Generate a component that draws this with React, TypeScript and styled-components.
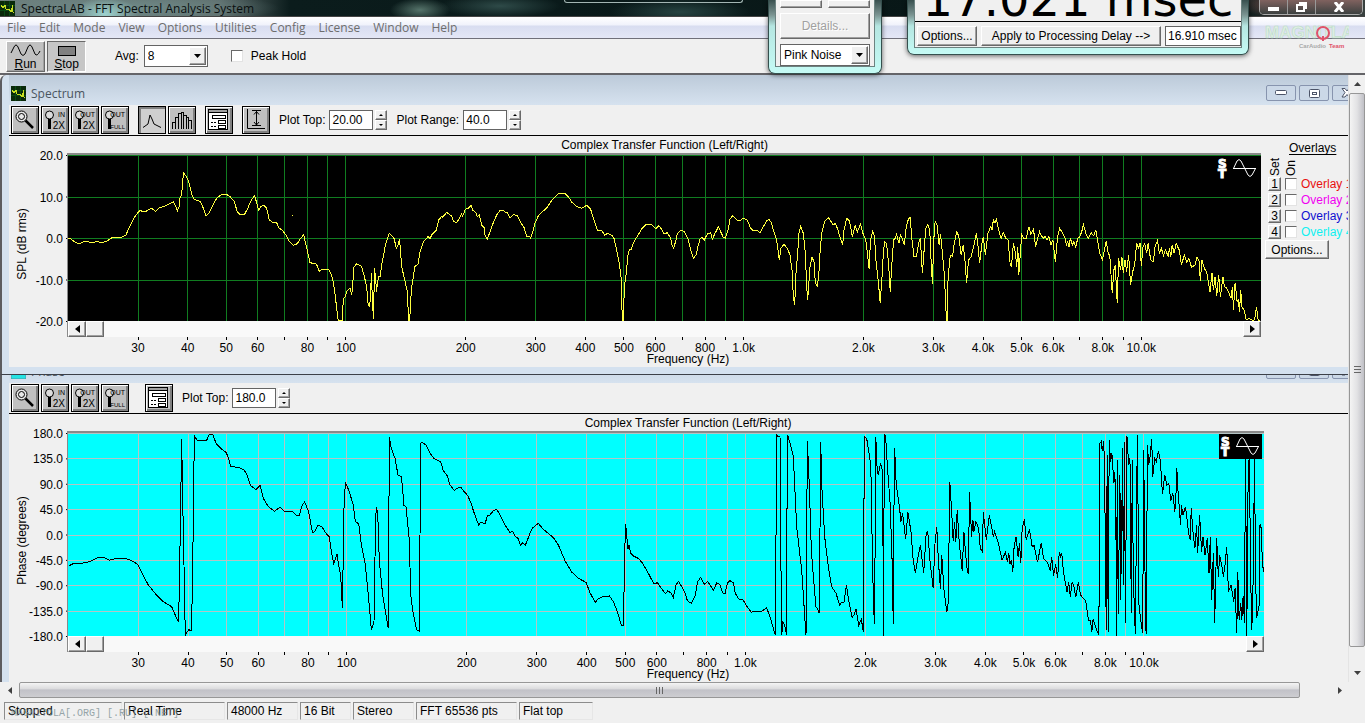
import type { ReactNode } from "react";
import styled, { createGlobalStyle, css } from "styled-components";

const GlobalStyle = createGlobalStyle`
  * {
    box-sizing: border-box;
  }

  body {
    margin: 0;
    background-color: #f0f0f0;
    color: #000;
    font-family: "Liberation Sans", Arial, sans-serif;
    font-size: 12px;
  }

  button,
  input,
  select {
    margin: 0;
    padding: 0;
    font: inherit;
    color: inherit;
  }
`;

const raised = css`
  border: 1px solid;
  border-color: #fff #696969 #696969 #fff;
  box-shadow: inset -1px -1px 0 #a0a0a0;
`;

const uiFont = css`
  font-family: "Open Sans", "Noto Sans", sans-serif;
`;

const Page = styled.div`
  position: relative;
  display: flex;
  flex-direction: column;
  min-height: 100vh;
  overflow: hidden;
`;

const AppTitle = styled.header`
  ${uiFont}
  display: flex;
  align-items: center;
  gap: 6px;
  height: 17px;
  overflow: hidden;
  white-space: nowrap;
  color: #0a0f0f;
  border-bottom: 1px solid #444;
  background:
    radial-gradient(ellipse 34px 16px at 105px 14px, #9ed3cf, transparent),
    radial-gradient(ellipse 150px 16px at 130px 8px, #6f8a88, transparent),
    radial-gradient(ellipse 30px 12px at 420px 10px, #55736a, transparent),
    radial-gradient(ellipse 60px 12px at 500px 6px, #2e4a48, transparent),
    radial-gradient(ellipse 70px 14px at 680px 12px, #274442, transparent),
    radial-gradient(ellipse 60px 16px at 1300px 4px, #9a5c58, transparent),
    linear-gradient(90deg, #6d7f7d, #5c6b6a 220px, #0b1c1c 290px, #071515 1200px, #39413f);
`;

const MenuBar = styled.nav`
  ${uiFont}
  display: flex;
  align-items: center;
  gap: 13px;
  height: 22px;
  padding: 0 7px;
  border-bottom: 1px solid #70707a;
  background: linear-gradient(#fff, #f0f2fb 8px, #d8ddf0 9px, #e4e7f6);
`;

const MenuLink = styled.a`
  color: #6d6d6d;
  text-decoration: none;
`;

const MainToolbar = styled.div`
  display: flex;
  align-items: center;
  height: 36px;
  padding-left: 6px;
  border-bottom: 2px solid #646468;
`;

const RunButton = styled.button<{ $pressed?: boolean }>`
  ${raised}
  display: flex;
  flex-direction: column;
  align-items: center;
  width: 39px;
  height: 31px;
  margin-right: 2px;
  padding-top: 1px;
  line-height: 12px;
  background-color: ${({ $pressed }) => ($pressed ? "#c6c6c6" : "#c0c0c0")};
  ${({ $pressed }) =>
    $pressed &&
    css`
      border-color: #696969 #fff #fff #696969;
      box-shadow: none;
    `}

  svg {
    flex: none;
  }

  u {
    text-underline-offset: 1px;
  }
`;

const AvgLabel = styled.label`
  margin: 0 5px 0 27px;
`;

const SelectBox = styled.span<{ $width: number }>`
  display: flex;
  width: ${({ $width }) => $width}px;
  height: 22px;
  border: 1px solid #646464;
  background-color: #fff;

  select {
    flex: 1;
    min-width: 0;
    margin-right: -17px;
    padding: 0 3px;
    border: 0;
    appearance: none;
    background: none;
  }

  svg {
    ${raised}
    width: 17px;
    height: 18px;
    margin: 1px;
    background-color: #f0f0f0;
    pointer-events: none;
  }
`;

const Check = styled.input`
  appearance: none;
  flex: none;
  width: 12px;
  height: 12px;
  border: 1px solid;
  border-color: #696969 #e3e3e3 #e3e3e3 #696969;
  background-color: #fff;
`;

const CheckLabel = styled.label`
  display: flex;
  align-items: center;
  gap: 8px;
  margin-left: 23px;
`;

const Workspace = styled.main`
  flex: 1;
  display: grid;
  grid-template-columns: minmax(0, 1fr) 17px;
  grid-template-rows: 1fr 16px;
`;

const Documents = styled.div`
  overflow: hidden;
  background-color: #f0f0f0;
`;

const Doc = styled.section<{ $last?: boolean }>`
  padding: 0 0 ${({ $last }) => ($last ? 0 : 7)}px 7px;
  border-left: 2px solid #5c5c60;
  border-bottom: ${({ $last }) => ($last ? "0" : "1px solid #3c4048")};
  border-top-left-radius: ${({ $last }) => ($last ? 0 : 6)}px;
  background-color: #d4e1ef;
`;

const TitleClip = styled.div<{ $height: number }>`
  display: flex;
  align-items: flex-end;
  height: ${({ $height }) => $height}px;
  overflow: hidden;
`;

const DocTitle = styled.div`
  ${uiFont}
  flex: 1;
  display: flex;
  align-items: flex-end;
  gap: 5px;
  height: 30px;
  padding: 0 0 4px 2px;
  color: #4a5560;
  background: linear-gradient(#bccad9, #d6e2ef);

  span {
    line-height: 14px;
  }
`;

const DocButtons = styled.div`
  display: flex;
  gap: 3px;
  margin: 0 -14px 0 auto;
`;

const DocButton = styled.button`
  display: grid;
  place-items: center;
  width: 30px;
  height: 16px;
  border: 1px solid #8794ae;
  border-radius: 2px;
  background-color: #cbd8e7;
`;

const Client = styled.div`
  background-color: #f0f0f0;
`;

const PlotToolbar = styled.div`
  display: flex;
  align-items: center;
  gap: 9px;
  height: 31px;
  padding-left: 2px;
  border-bottom: 1px solid #000;
`;

const ToolGroup = styled.div<{ $indent?: number }>`
  display: flex;
  gap: 2px;
  margin-left: ${({ $indent }) => $indent ?? 0}px;
`;

const ToolButton = styled.button<{ $pressed?: boolean }>`
  width: 28px;
  height: 28px;
  border: 1px solid #000;
  background-color: ${({ $pressed }) => ($pressed ? "#cfcfcf" : "#c0c0c0")};
  box-shadow: ${({ $pressed }) =>
    $pressed ? "inset 2px 2px 0 #808080" : "inset 1px 1px 0 #fff, inset -2px -2px 0 #808080"};

  svg {
    display: block;
  }
`;

const Field = styled.div`
  display: flex;
  align-items: center;
  gap: 4px;

  input {
    width: 44px;
    height: 20px;
    padding: 0 2px;
    border: 1px solid #646464;
    background-color: #fff;
  }
`;

const Spinner = styled.span`
  display: flex;
  flex-direction: column;
  margin-left: -2px;

  button {
    ${raised}
    display: grid;
    place-items: center;
    width: 12px;
    height: 10px;
    background-color: #f0f0f0;
  }
`;

const Chart = styled.div<{ $side: number }>`
  display: grid;
  grid-template-columns: 59px minmax(0, 1fr) ${({ $side }) => $side}px;
  grid-template-rows: 17px auto 16px 16px 14px;
`;

const ChartTitle = styled.h2<{ $wide: boolean }>`
  grid-row: 1;
  grid-column: ${({ $wide }) => ($wide ? "1 / -1" : "2")};
  margin: 0;
  padding-left: ${({ $wide }) => ($wide ? 19 : 0)}px;
  font-size: 12px;
  font-weight: 400;
  line-height: 18px;
  text-align: center;
`;

const YAxis = styled.svg`
  grid-row: 2;
  grid-column: 1;
  width: 59px;
  margin-top: 2px;
  overflow: visible;
`;

const Plot = styled.div`
  position: relative;
  grid-row: 2;
  grid-column: 2;
  border-top: 2px solid #8a8a8a;
  border-left: 1px solid #8a8a8a;
  margin-left: -1px;

  > svg:first-child {
    display: block;
    width: 100%;
  }
`;

const Marker = styled.svg<{ $boxed: boolean }>`
  position: absolute;
  top: 1px;
  right: 2px;
  background-color: ${({ $boxed }) => ($boxed ? "#000" : "transparent")};
`;

const PlotScroll = styled.div`
  grid-row: 3;
  grid-column: 2;
  display: flex;
  margin-left: -1px;
  border-left: 1px solid #8a8a8a;
  background-color: #f9f9f9;

  button {
    ${raised}
    display: grid;
    place-items: center;
    width: 18px;
    height: 16px;
    background-color: #f0f0f0;
  }

  button:last-child {
    margin-left: auto;
  }
`;

const XAxis = styled.svg`
  grid-row: 4;
  grid-column: 2;
  width: 100%;
  height: 16px;
  overflow: visible;
`;

const AxisCaption = styled.div`
  grid-row: 5;
  grid-column: 1 / -1;
  padding-left: 19px;
  line-height: 13px;
  text-align: center;
`;

const OverlayPanel = styled.aside`
  grid-row: 1 / 3;
  grid-column: 3;
  display: flex;
  flex-direction: column;
  padding: 5px 0 0 7px;
  overflow: hidden;
  white-space: nowrap;

  > u {
    padding-left: 21px;
    line-height: 14px;
    text-underline-offset: 2px;
  }
`;

const OverlayHeads = styled.div`
  display: flex;
  gap: 2px;
  height: 21px;
  line-height: 14px;

  span {
    writing-mode: vertical-rl;
    transform: rotate(180deg);
  }
`;

const OverlayRow = styled.div<{ $color: string }>`
  display: flex;
  align-items: center;
  gap: 4px;
  height: 16px;

  button {
    ${raised}
    flex: none;
    width: 13px;
    height: 14px;
    line-height: 11px;
    background-color: #f0f0f0;
  }

  label {
    color: ${({ $color }) => $color};
  }
`;

const ClassicButton = styled.button<{ $width: number; $height?: number }>`
  ${raised}
  flex: none;
  width: ${({ $width }) => $width}px;
  height: ${({ $height }) => $height ?? 20}px;
  background-color: #f0f0f0;

  &:disabled {
    color: #a0a0a0;
    text-shadow: 1px 1px 0 #fff;
  }
`;

const OverlayOptions = styled(ClassicButton)`
  margin: 0 0 0 -3px;
`;

const VScroll = styled.div`
  display: flex;
  flex-direction: column;
  align-items: center;
  border-left: 1px solid #e4e4e4;
  background-color: #f0f0f0;
`;

const HScroll = styled.div`
  display: flex;
  align-items: center;
  background-color: #f0f0f0;
`;

const ScrollArrow = styled.button<{ $w: number; $h: number }>`
  display: grid;
  place-items: center;
  width: ${({ $w }) => $w}px;
  height: ${({ $h }) => $h}px;
  border: 0;
  background: none;
`;

const VThumb = styled.div`
  flex: 1;
  display: grid;
  place-items: center;
  width: 16px;
  border: 1px solid #979797;
  border-radius: 2px;
  background: linear-gradient(90deg, #f4f4f4, #e2e2e4 50%, #c0c0c6);
`;

const HThumb = styled.div`
  flex: 1;
  display: grid;
  place-items: center;
  height: 16px;
  border: 1px solid #979797;
  border-radius: 2px;
  background: linear-gradient(#f4f4f4, #dcdcde 40%, #c2c2c8 50%, #cdcdd1);
`;

const StatusBar = styled.footer`
  position: relative;
  display: flex;
  gap: 2px;
  height: 25px;
  padding: 4px 4px;
`;

const StatusCell = styled.div<{ $width: number }>`
  width: ${({ $width }) => $width}px;
  height: 18px;
  padding-left: 3px;
  border: 1px solid;
  border-color: #8c8c8c #e6e6e6 #e6e6e6 #8c8c8c;
  line-height: 16px;
  white-space: nowrap;
`;

const SiteMark = styled.div`
  position: absolute;
  left: 11px;
  bottom: 3px;
  color: #7f9296;
  font-family: "Liberation Mono", monospace;
  font-size: 10px;
  line-height: 12px;
  opacity: 0.8;
`;

const Glass = styled.div<{ $left: number; $width: number; $height: number }>`
  position: absolute;
  top: 0;
  left: ${({ $left }) => $left}px;
  width: ${({ $width }) => $width}px;
  height: ${({ $height }) => $height}px;
  padding: 0 6px 6px;
  border: 1px solid #35504e;
  border-top: 0;
  border-radius: 0 0 7px 7px;
  background: linear-gradient(#39504f, #7b9492 15px, #b5e6e1 26px, #c5fbf5);
  box-shadow: 0 1px 5px rgba(0, 0, 0, 0.6);
  overflow: hidden;
`;

const GeneratorBody = styled.div`
  display: flex;
  flex-direction: column;
  gap: 5px;
  height: 100%;
  padding: 0 4px;
  border: 1px solid #6c8280;
  border-top: 0;
  background-color: #f0f0f0;
`;

const ButtonPair = styled.div`
  display: flex;
  gap: 6px;
`;

const DelayBody = styled.div`
  height: 100%;
  border: 1px solid #6c8280;
  border-top: 0;
  background-color: #f0f0f0;
  overflow: hidden;
`;

const Readout = styled.div`
  display: flex;
  align-items: flex-end;
  justify-content: center;
  height: 22px;
  border-bottom: 1px solid #000;
  font-family: "DejaVu Sans", sans-serif;
  font-size: 48px;
  line-height: 44px;
  white-space: nowrap;
`;

const DelayRow = styled.div`
  display: flex;
  gap: 4px;
  padding: 4px 0 0 2px;

  input {
    flex: 1;
    min-width: 0;
    height: 20px;
    padding-left: 2px;
    border: 1px solid #646464;
    background-color: #fff;
  }
`;

const CaptionButtons = styled.div`
  position: absolute;
  top: 0;
  right: 2px;
  display: flex;
  height: 15px;
  border: 1px solid #aaa;
  border-top: 0;
  border-radius: 0 0 5px 5px;
  overflow: hidden;

  button {
    display: grid;
    place-items: center;
    width: 28px;
    height: 11px;
    border: 0;
    border-right: 1px solid #999;
    background: linear-gradient(#80625f, #3c4140);
    height: 14px;
  }

  button:last-child {
    width: 46px;
    border-right: 0;
  }
`;

const StripTab = styled.div`
  position: absolute;
  top: 0;
  left: 564px;
  width: 179px;
  height: 3px;
  border: 1px solid #a3b5b3;
  border-top: 0;
  border-radius: 0 0 4px 4px;
`;

const LogoMark = styled.svg`
  position: absolute;
  top: 18px;
  right: 16px;
`;

const spectrumTrace = [
  {
    transform: "",
    points:
      "204,325 213,327 222,334 234,340 240,340 252,335 264,335 276,338 292,334 304,338 318,335 336,323 364,322 378,315 384,300 396,275 408,255 419,242 430,244 440,243 453,235 460,238 466,244 478,234 490,230 520,216 527,228 532,243 537,230 540,205 545,195 548,150 551,129 558,138 564,150 570,170 576,195 582,208 600,214 606,224 618,257 627,250 640,222 650,205 662,195 680,193 690,200 702,213 712,245 718,252 734,252 742,238 752,214 764,196 769,215 776,240 783,230 791,226 800,235 808,270 820,278 830,278 836,293 848,302 858,315 866,332 880,346 892,341 900,328 911,314 918,345 925,375 930,398 948,402 952,408 957,424 966,418 978,420 986,419 992,428 1000,455 1006,500 1013,560 1015,572 1027,572 1030,505 1036,500 1041,482 1050,475 1055,495 1058,470 1061,412 1070,401 1084,408 1092,435 1100,470 1104,520 1109,532 1112,490 1114,428 1118,530 1121,566 1123,415 1127,440 1129,485 1133,455 1136,440 1141,440 1144,410 1150,380 1156,345 1168,310 1182,325 1189,354 1194,345 1199,328 1200,345",
  },
  {
    transform: "translate(1200 0)",
    points:
      "0,345 5,410 12,440 21,480 24,530 26,572 29,572 34,480 40,440 44,410 54,402 60,365 70,335 80,325 84,320 90,326 95,315 108,302 116,270 126,258 128,262 140,247 155,258 160,273 170,278 178,265 185,252 188,258 196,238 204,235 213,226 218,240 228,248 232,260 238,255 245,285 252,292 255,315 262,328 270,305 280,278 290,255 300,242 308,240 315,246 322,248 330,264 340,254 352,257 362,278 372,292 380,318 388,318 392,325 400,300 405,280 415,257 425,247 440,234 455,212 470,195 480,189 494,190 505,200 515,216 530,230 545,235 560,226 572,238 582,270 592,300 606,302 614,316 622,310 636,316 642,325 650,360 658,400 663,440 667,572 670,572 673,470 680,420 683,380 688,358 693,360 700,340 708,325 725,297 738,284 755,284 768,296 776,287 785,298 792,312 802,308 812,325 816,345 821,355 828,330 832,312 842,301 853,304 865,330 872,360 880,385 888,375 895,345 900,328 905,322 913,330 922,312 932,308 937,328 945,310 955,291 962,305 970,322 976,325 984,300 990,268 998,257 1012,271 1020,272 1030,264 1042,270 1052,295 1060,303 1073,302 1080,309 1090,290 1100,273 1107,267 1115,280 1120,300 1130,330 1138,390 1143,355 1152,343 1162,355 1170,375 1176,420 1180,500 1184,525 1188,430 1193,370 1197,310 1202,290 1210,310 1216,370 1220,470 1223,510 1230,410 1236,382 1242,395 1246,460 1252,468 1256,440 1260,370 1265,310 1274,275 1285,262 1300,285 1306,280 1314,300 1320,322",
  },
  {
    transform: "translate(2520 0) scale(1.0045 1)",
    points:
      "0,322 8,345 12,300 20,265 28,272 37,320 45,287 52,305 61,283 70,315 77,330 82,370 87,418 91,330 98,303 103,320 108,400 114,450 120,518 125,450 130,360 134,335 139,340 145,400 150,485 155,400 160,330 165,325 169,312 176,340 180,315 186,325 192,345 198,290 205,265 210,263 214,320 221,380 228,380 235,340 240,325 246,430 252,350 256,295 262,283 268,300 272,390 276,462 280,330 284,275 290,285 296,345 300,312 306,370 312,440 318,572 321,572 322,460 328,385 332,375 336,380 341,340 349,305 355,320 362,375 368,345 374,400 378,458 384,390 392,380 400,345 407,310 412,345 417,400 424,340 428,320 434,375 442,310 450,290 454,300 458,270 463,278 467,268 474,300 481,325 488,308 495,325 502,330 508,400 512,410 518,338 524,370 528,410 531,350 534,435 540,350 543,315 548,325 556,325 564,290 570,312 578,298 584,350 596,305 602,318 608,325 612,318 618,330 624,320 630,345 636,330 643,395 650,320 656,295 665,310 672,325 676,345 680,335 684,350 688,325 694,345 698,335 704,352 710,325 716,320 722,305 727,284 735,312 742,325 750,308 758,318 764,300 768,325 776,370 784,390 795,332 800,365 806,380 813,490 818,420 822,405 828,518 832,385 838,420 842,380 846,430 851,390 856,425 862,375 868,465 874,425 880,405 886,338 892,355 896,340 900,408 905,350 910,340 916,370 920,340 928,390 936,395 941,350 948,332 954,370 960,355 966,378 972,360 980,378 984,355 988,380 992,345 998,370 1004,340 1013,360 1020,405 1028,375 1036,398 1042,385 1050,412 1060,405 1066,382 1073,395 1076,452 1081,390 1088,415 1095,425 1100,455 1105,485 1111,430 1115,480 1120,440 1125,498 1131,435 1136,500 1144,440 1148,470 1154,472 1160,485 1168,505 1172,470 1175,540 1180,458 1186,515 1190,510 1193,545 1197,480 1200,530 1207,540 1213,570 1222,565 1232,571 1238,570 1244,530 1249,571 1253,571",
  },
];

const phaseTrace = [
  {
    transform: "",
    points:
      "207,602 220,596 250,594 270,590 295,577 310,577 328,586 345,581 375,580 390,585 412,597 428,628 445,660 468,688 490,710 515,725 530,760 536,770 541,490 545,222 548,400 552,600 554,740 557,808 566,794 574,797 578,640 581,330 584,214 592,226 620,226 628,208 638,207 648,235 665,252 678,262 686,280 692,305 715,307 732,314 742,332 752,362 768,374 780,361 790,400 805,425 824,439 840,426 855,440 875,438 890,451 898,451 906,422 914,411 926,440 933,480 938,503 944,500 953,482 965,484 980,508 988,516 995,565 1001,596 1011,568 1016,600 1022,630 1027,728 1030,560 1032,430 1036,352 1046,375 1060,420 1066,470 1076,476 1084,540 1096,600 1105,690 1114,794 1122,770 1127,450 1130,432 1133,440 1138,590 1148,690 1158,750 1165,790 1167,400 1168,216 1174,250 1185,280 1194,330 1200,333",
  },
  {
    transform: "translate(1200 135)",
    points:
      "0,198 4,200 8,240 12,286 18,290 22,330 27,380 33,560 38,600 44,630 50,660 58,663 60,380 62,100 66,97 78,105 90,130 102,145 122,156 130,182 142,198 150,225 163,241 175,233 183,233 192,244 204,258 215,285 220,302 230,330 236,345 243,336 255,342 262,318 270,315 280,302 290,298 300,315 315,345 330,368 338,363 345,378 354,385 362,406 368,398 376,406 390,370 398,354 415,340 430,358 460,383 475,405 495,452 515,486 535,505 558,517 570,548 586,578 592,568 612,558 620,561 628,557 640,575 652,605 664,645 670,645 673,500 675,400 677,343 684,418 687,405 692,430 700,438 715,445 728,460 745,490 762,522 772,518 785,536 796,551 803,543 812,548 820,562 828,525 836,514 845,530 856,550 862,572 874,580 886,555 893,515 902,502 914,524 922,514 930,525 940,541 950,519 960,524 968,548 975,552 982,520 990,512 1000,518 1006,550 1016,567 1028,568 1040,588 1054,607 1064,604 1086,603 1100,594 1110,620 1126,676 1128,380 1130,76 1134,80 1140,78 1142,380 1145,676 1149,635 1154,645 1160,676 1161,300 1163,76 1170,98 1180,140 1190,350 1205,480 1218,676 1220,400 1222,92 1228,230 1234,420 1240,500 1248,590 1254,600 1258,610 1260,360 1262,95 1266,240 1274,380 1285,470 1295,530 1308,550 1320,588",
  },
  {
    transform: "translate(2520 0) scale(1.0045 1)",
    points:
      "0,720 4,712 12,712 19,660 26,705 36,757 42,750 48,733 56,780 64,762 67,785 70,800 71,510 73,215 80,222 92,300 96,530 100,720 103,778 106,400 107,215 110,300 114,330 121,295 128,320 129,812 131,500 133,210 136,212 142,310 150,420 156,600 159,778 161,450 163,248 168,360 178,430 182,470 187,445 196,522 203,442 212,500 218,580 225,625 232,580 240,540 246,590 250,625 257,510 262,497 268,580 278,668 284,530 289,487 294,590 300,672 304,570 310,670 319,742 325,700 326,420 328,350 333,430 338,528 342,470 346,530 350,435 356,530 365,618 370,500 378,600 383,628 387,382 393,515 397,465 400,500 406,470 414,490 419,550 425,560 428,442 437,525 446,450 458,515 462,500 472,530 484,585 494,562 500,590 504,565 508,598 512,585 516,622 520,545 526,515 532,575 536,535 540,595 544,490 551,462 556,525 566,493 574,545 580,542 590,592 596,560 601,535 608,580 620,592 628,618 632,575 638,632 644,598 650,640 655,560 658,575 662,563 668,625 678,680 683,652 688,695 693,652 698,660 704,697 712,650 718,690 734,708 742,765 748,768 752,800 756,762 768,800 773,808 775,520 776,235 780,230 783,258 788,228 793,540 795,795 798,270 801,800 804,225 808,290 812,265 818,355 821,320 825,565 826,812 828,285 831,748 836,330 838,705 841,520 844,250 846,660 850,230 852,775 857,213 862,300 866,280 870,745 873,285 876,640 882,808 888,210 893,720 898,765 904,805 907,255 910,540 913,790 915,808 918,240 922,300 926,275 931,222 934,335 940,280 945,290 951,258 957,290 963,388 970,330 976,360 982,355 988,408 994,385 1000,440 1003,400 1006,310 1009,370 1017,480 1020,420 1024,450 1032,425 1042,510 1046,525 1049,430 1054,500 1060,550 1065,480 1068,565 1074,450 1080,560 1084,515 1090,570 1097,520 1102,625 1106,515 1110,705 1115,565 1119,775 1125,520 1130,635 1134,570 1140,600 1145,635 1150,600 1155,545 1160,680 1168,660 1176,710 1180,670 1185,805 1188,620 1192,765 1197,715 1200,765 1204,692 1208,775 1211,270 1215,812 1218,400 1222,270 1228,720 1230,795 1234,640 1238,280 1241,620 1244,760 1252,720 1254,480 1257,478 1262,600 1266,622",
  },
];

type Tick = [frequency: number, label: string];

const ticks: Tick[] = [
  [30, "30"],
  [40, "40"],
  [50, "50"],
  [60, "60"],
  [70, ""],
  [80, "80"],
  [90, ""],
  [100, "100"],
  [200, "200"],
  [300, "300"],
  [400, "400"],
  [500, "500"],
  [600, "600"],
  [700, ""],
  [800, "800"],
  [900, ""],
  [1000, "1.0k"],
  [2000, "2.0k"],
  [3000, "3.0k"],
  [4000, "4.0k"],
  [5000, "5.0k"],
  [6000, "6.0k"],
  [7000, ""],
  [8000, "8.0k"],
  [9000, ""],
  [10000, "10.0k"],
];

// log scale, 20 Hz to 20 kHz
const position = (frequency: number) => `${(Math.log10(frequency / 20) / Math.log10(1000)) * 100}%`;

type ChartProps = {
  height: number;
  side: number;
  viewBox: string;
  trace: { transform: string; points: string }[];
  yTitle: string;
  yLabels: string[];
  colors: { back: string; grid: string; line: string };
  phase?: boolean;
  children?: ReactNode;
};

const TransferChart = ({
  height,
  side,
  viewBox,
  trace,
  yTitle,
  yLabels,
  colors,
  phase = false,
  children,
}: ChartProps) => {
  const step = height / (yLabels.length - 1);
  return (
    <Chart $side={side}>
      <ChartTitle $wide={phase}>Complex Transfer Function (Left/Right)</ChartTitle>
      <YAxis height={height}>
        <text x={-height / 2 - 6} y={17} transform="rotate(-90)" textAnchor="middle">
          {yTitle}
        </text>
        {yLabels.map((label, i) => (
          <g key={label}>
            <text x={54} y={i * step + 5} textAnchor="end">
              {label}
            </text>
            <line x1={57} x2={59} y1={i * step + 0.5} y2={i * step + 0.5} stroke="#000" />
          </g>
        ))}
      </YAxis>
      <Plot>
        <svg height={height} shapeRendering="crispEdges">
          <rect width="100%" height="100%" fill={colors.back} />
          <g stroke={colors.grid}>
            {yLabels.slice(0, -1).map((label, i) => (
              <line key={label} x1="0" x2="100%" y1={Math.round(i * step) + 0.5} y2={Math.round(i * step) + 0.5} />
            ))}
            {ticks.map(([f]) => (
              <line key={f} x1={position(f)} x2={position(f)} y1="0" y2="100%" />
            ))}
          </g>
          <svg width="100%" height="100%" viewBox={viewBox} preserveAspectRatio="none">
            {trace.map((part) => (
              <polyline
                key={part.transform}
                transform={part.transform}
                points={part.points}
                fill="none"
                stroke={colors.line}
                vectorEffect="non-scaling-stroke"
              />
            ))}
            {!phase && <rect x="877" y="255" width="3" height="3" fill={colors.line} />}
          </svg>
        </svg>
        <Marker $boxed={phase} width="43" height="25" fill="none" stroke="#fff">
          <g fontSize="12" fontWeight="700" fontFamily="DejaVu Sans" fill="#fff">
            <text x="2" y="12">
              S
            </text>
            <text x="2" y="22">
              T
            </text>
          </g>
          <path d="M17 12.500H40M17.500 12.500L21 5Q23 2 25 5L32 19Q34 22 36 19L39.500 12.500" />
        </Marker>
      </Plot>
      <PlotScroll>
        <button aria-label="Scroll left">
          <svg width="5" height="8">
            <path d="M5 0V8L0 4z" />
          </svg>
        </button>
        <button aria-label="Position" />
        <button aria-label="Scroll right">
          <svg width="5" height="8">
            <path d="M0 0V8L5 4z" />
          </svg>
        </button>
      </PlotScroll>
      <XAxis>
        {ticks.map(([f, label]) => (
          <g key={f}>
            <line x1={position(f)} x2={position(f)} y1="0" y2="3" stroke="#000" shapeRendering="crispEdges" />
            <text x={position(f)} y="15" textAnchor="middle">
              {label}
            </text>
          </g>
        ))}
      </XAxis>
      <AxisCaption>Frequency (Hz)</AxisCaption>
      {children}
    </Chart>
  );
};

const AppIcon = () => (
  <svg width="15" height="15" shapeRendering="crispEdges">
    <rect width="15" height="15" fill="#0a2a0a" />
    <path d="M0 4.500H15M0 9.500H15M4.500 0V15M9.500 0V15" stroke="#0a4a14" />
    <path d="M1 4L3 7L5 4L6 8L9 8L11 11L13 4L12 10L14 12" fill="none" stroke="#c8e020" />
  </svg>
);

const PhaseIcon = () => (
  <svg width="15" height="15">
    <rect width="15" height="15" fill="#25e3e3" stroke="#4a9aa8" />
  </svg>
);

const DownArrow = () => (
  <svg viewBox="0 0 15 16">
    <path d="M4 6H11L7.500 10z" />
  </svg>
);

const Magnifier = () => (
  <svg width="26" height="26" fill="none" stroke="#000">
    <circle cx="9.500" cy="9.500" r="5.500" fill="#e8e8e8" />
    <circle cx="9.500" cy="9.500" r="3" />
    <path d="M13.500 13.500L21 21" strokeWidth="2.500" />
  </svg>
);

const ZoomIcon = ({ top, bottom }: { top: string; bottom: string }) => (
  <svg width="26" height="26" fill="none" stroke="#000">
    <circle cx="7.500" cy="8" r="4" fill="#dcdcdc" />
    <path d="M7.500 12V22" strokeWidth="3" />
    <g fill="#000" stroke="none" fontFamily="Liberation Sans">
      <text x="23" y="10" fontSize="7" textAnchor="end">
        {top}
      </text>
      <text x="23" y="22" fontSize={bottom === "2X" ? 10 : 6} textAnchor="end">
        {bottom}
      </text>
    </g>
  </svg>
);

const PeakIcon = () => (
  <svg width="26" height="26" fill="none" stroke="#000">
    <path d="M4 20.500L9 17L11 8L13 12L15 17L22 20.500" />
  </svg>
);

const BarsIcon = () => (
  <svg width="26" height="26" fill="none" stroke="#000" shapeRendering="crispEdges">
    <path d="M3.500 22V15.500H6.500V22V10.500H9.500V22V6.500H12.500V22V5.500H14.500V22V8.500H17.500V22V10.500H19.500V22V13.500H22.500V22" />
  </svg>
);

const FormIcon = () => (
  <svg width="26" height="26" fill="none" stroke="#000" shapeRendering="crispEdges">
    <rect x="2.500" y="2.500" width="19" height="20" fill="#fff" />
    <rect x="2.500" y="2.500" width="19" height="3" fill="#a0a0a0" />
    <rect x="6.500" y="8.500" width="13" height="3" />
    <rect x="12.500" y="13.500" width="7" height="3" />
    <rect x="12.500" y="18.500" width="7" height="3" />
    <path d="M5 15.500H10M5 19.500H10" strokeDasharray="2 1" />
  </svg>
);

const RangeIcon = () => (
  <svg width="26" height="26" fill="none" stroke="#000">
    <path d="M4.500 2V21.500H22M9 3.500H18M9 18.500H18M13.500 4V18M11 7.500L13.500 4.500L16 7.500M11 15L13.500 18L16 15" />
  </svg>
);

const ZoomTools = () => (
  <ToolGroup>
    <ToolButton aria-label="Zoom">
      <Magnifier />
    </ToolButton>
    <ToolButton>
      <ZoomIcon top="IN" bottom="2X" />
    </ToolButton>
    <ToolButton>
      <ZoomIcon top="OUT" bottom="2X" />
    </ToolButton>
    <ToolButton>
      <ZoomIcon top="OUT" bottom="FULL" />
    </ToolButton>
  </ToolGroup>
);

const NumberField = ({ id, label, value }: { id: string; label: string; value: string }) => (
  <Field>
    <label htmlFor={id}>{label}</label>
    <input id={id} type="text" defaultValue={value} />
    <Spinner>
      <button aria-label={`${label} up`}>
        <svg width="4" height="2">
          <path d="M0 2H4L2 0z" />
        </svg>
      </button>
      <button aria-label={`${label} down`}>
        <svg width="4" height="2">
          <path d="M0 0H4L2 2z" />
        </svg>
      </button>
    </Spinner>
  </Field>
);

const DocHeader = ({ icon, title, height }: { icon: ReactNode; title: string; height: number }) => (
  <TitleClip $height={height}>
    <DocTitle>
      {icon}
      <span>{title}</span>
      <DocButtons>
        <DocButton aria-label="Minimize">
          <svg width="12" height="6">
            <rect x="0.500" y="0.500" width="11" height="4" rx="1" fill="#fff" stroke="#4c5468" />
          </svg>
        </DocButton>
        <DocButton aria-label="Maximize">
          <svg width="11" height="9" fill="#fff" stroke="#4c5468">
            <rect x="0.500" y="0.500" width="10" height="8" rx="1" />
            <rect x="3.500" y="3.500" width="4" height="2" />
          </svg>
        </DocButton>
        <DocButton aria-label="Close">
          <svg width="12" height="10" fill="#fff" stroke="#4c5468">
            <path d="M1 0.500H4L6 3L8 0.500H11L8 4.500L11 9H8L6 6.500L4 9H1L4 4.500z" />
          </svg>
        </DocButton>
      </DocButtons>
    </DocTitle>
  </TitleClip>
);

const menus = ["File", "Edit", "Mode", "View", "Options", "Utilities", "Config", "License", "Window", "Help"];

const overlays = ["#e81010", "#f000f0", "#1010d0", "#10f0f0"];

const statusCells: [string, number][] = [
  ["Stopped", 118],
  ["Real Time", 101],
  ["48000 Hz", 71],
  ["16 Bit", 51],
  ["Stereo", 61],
  ["FFT 65536 pts", 101],
  ["Flat top", 74],
];

export default function App() {
  return (
    <Page>
      <GlobalStyle />
      <AppTitle>
        <AppIcon />
        <span>SpectraLAB - FFT Spectral Analysis System</span>
      </AppTitle>
      <MenuBar>
        {menus.map((menu) => (
          <MenuLink key={menu} href="#">
            {menu}
          </MenuLink>
        ))}
      </MenuBar>
      <MainToolbar>
        <RunButton>
          <svg width="31" height="15" fill="none" stroke="#000">
            <path d="M1 10L4 4Q6 0 8 4L11 11Q13 14 15 11L18 4Q20 0 22 4L25 11Q27 14 30 8" />
          </svg>
          <span>
            <u>R</u>un
          </span>
        </RunButton>
        <RunButton $pressed>
          <svg width="31" height="15">
            <rect x="7.500" y="3.500" width="17" height="9" fill="#808080" stroke="#000" />
          </svg>
          <span>
            <u>S</u>top
          </span>
        </RunButton>
        <AvgLabel htmlFor="avg">Avg:</AvgLabel>
        <SelectBox $width={64}>
          <select id="avg" defaultValue="8">
            <option>4</option>
            <option>8</option>
            <option>16</option>
          </select>
          <DownArrow />
        </SelectBox>
        <CheckLabel>
          <Check type="checkbox" />
          Peak Hold
        </CheckLabel>
      </MainToolbar>

      <Workspace>
        <Documents>
          <Doc>
            <DocHeader icon={<AppIcon />} title="Spectrum" height={30} />
            <Client>
              <PlotToolbar>
                <ZoomTools />
                <ToolGroup>
                  <ToolButton $pressed aria-label="Line plot">
                    <PeakIcon />
                  </ToolButton>
                  <ToolButton aria-label="Bar plot">
                    <BarsIcon />
                  </ToolButton>
                </ToolGroup>
                <ToolButton aria-label="Plot options">
                  <FormIcon />
                </ToolButton>
                <ToolButton aria-label="Autoscale">
                  <RangeIcon />
                </ToolButton>
                <NumberField id="spectrum-top" label="Plot Top:" value="20.00" />
                <NumberField id="spectrum-range" label="Plot Range:" value="40.0" />
              </PlotToolbar>
              <TransferChart
                height={166}
                side={87}
                viewBox="204 75 3579 498"
                trace={spectrumTrace}
                yTitle="SPL (dB rms)"
                yLabels={["20.0", "10.0", "0.0", "-10.0", "-20.0"]}
                colors={{ back: "#000", grid: "#107c20", line: "#ffff40" }}
              >
                <OverlayPanel>
                  <u>Overlays</u>
                  <OverlayHeads>
                    <span>Set</span>
                    <span>On</span>
                  </OverlayHeads>
                  {overlays.map((color, i) => (
                    <OverlayRow key={color} $color={color}>
                      <button>{i + 1}</button>
                      <Check type="checkbox" id={`overlay-${i}`} />
                      <label htmlFor={`overlay-${i}`}>Overlay {i + 1}</label>
                    </OverlayRow>
                  ))}
                  <OverlayOptions $width={64} $height={19}>
                    Options...
                  </OverlayOptions>
                </OverlayPanel>
              </TransferChart>
            </Client>
          </Doc>

          <Doc $last>
            <DocHeader icon={<PhaseIcon />} title="Phase" height={8} />
            <Client>
              <PlotToolbar>
                <ZoomTools />
                <ToolGroup $indent={7}>
                  <ToolButton aria-label="Plot options">
                    <FormIcon />
                  </ToolButton>
                </ToolGroup>
                <NumberField id="phase-top" label="Plot Top:" value="180.0" />
              </PlotToolbar>
              <TransferChart
                phase
                height={203}
                side={84}
                viewBox="204 204 3588 609"
                trace={phaseTrace}
                yTitle="Phase (degrees)"
                yLabels={["180.0", "135.0", "90.0", "45.0", "0.0", "-45.0", "-90.0", "-135.0", "-180.0"]}
                colors={{ back: "#00ffff", grid: "#b4c4c4", line: "#000" }}
              />
            </Client>
          </Doc>
        </Documents>

        <VScroll>
          <ScrollArrow $w={16} $h={18} aria-label="Up">
            <svg width="7" height="4">
              <path d="M0 4H7L3.500 0z" fill="#404040" />
            </svg>
          </ScrollArrow>
          <VThumb>
            <svg width="7" height="8" stroke="#666">
              <path d="M0 0.500H7M0 3.500H7M0 6.500H7" />
            </svg>
          </VThumb>
          <ScrollArrow $w={16} $h={35} aria-label="Down">
            <svg width="7" height="20">
              <path d="M0 16H7L3.500 20z" fill="#404040" />
            </svg>
          </ScrollArrow>
        </VScroll>
        <HScroll>
          <ScrollArrow $w={19} $h={16} aria-label="Left">
            <svg width="4" height="7">
              <path d="M4 0V7L0 3.500z" fill="#404040" />
            </svg>
          </ScrollArrow>
          <HThumb>
            <svg width="8" height="7" stroke="#666">
              <path d="M0.500 0V7M3.500 0V7M6.500 0V7" />
            </svg>
          </HThumb>
          <ScrollArrow $w={48} $h={16} aria-label="Right">
            <svg width="36" height="7">
              <path d="M32 0V7L36 3.500z" fill="#404040" />
            </svg>
          </ScrollArrow>
        </HScroll>
      </Workspace>

      <StatusBar>
        {statusCells.map(([text, width]) => (
          <StatusCell key={text} $width={width}>
            {text}
          </StatusCell>
        ))}
        <SiteMark>MAGNITOLA[.ORG] [.RU] [.NET]</SiteMark>
      </StatusBar>

      <StripTab />
      <CaptionButtons>
        <button aria-label="Minimize window">
          <svg width="11" height="8">
            <rect x="0" y="4" width="11" height="4" fill="#fff" />
          </svg>
        </button>
        <button aria-label="Restore window">
          <svg width="11" height="10" fill="none" stroke="#fff" strokeWidth="2">
            <path d="M3 1H10V7" />
            <rect x="1" y="3" width="7" height="6" />
          </svg>
        </button>
        <button aria-label="Close window">
          <svg width="10" height="10" stroke="#fff" strokeWidth="3">
            <path d="M1 0L9 10M9 0L1 10" />
          </svg>
        </button>
      </CaptionButtons>

      <Glass $left={768} $width={114} $height={74}>
        <GeneratorBody>
          <ButtonPair>
            <ClassicButton $width={42} $height={8} aria-label="Run generator" />
            <ClassicButton $width={42} $height={8} aria-label="Stop generator" />
          </ButtonPair>
          <ClassicButton $width={90} $height={26} disabled>
            Details...
          </ClassicButton>
          <SelectBox $width={90}>
            <select aria-label="Signal" defaultValue="Pink Noise">
              <option>Pink Noise</option>
              <option>White Noise</option>
            </select>
            <DownArrow />
          </SelectBox>
        </GeneratorBody>
      </Glass>
      <Glass $left={907} $width={342} $height={55}>
        <DelayBody>
          <Readout>17.021 msec</Readout>
          <DelayRow>
            <ClassicButton $width={60}>Options...</ClassicButton>
            <ClassicButton $width={180}>Apply to Processing Delay --&gt;</ClassicButton>
            <input type="text" aria-label="Processing delay" defaultValue="16.910 msec" />
          </DelayRow>
        </DelayBody>
      </Glass>

      <LogoMark width="84" height="32" fontFamily="Liberation Sans" fontWeight="700">
        <g fill="#dfeee4" stroke="#b5dac2" strokeWidth="0.500" fontSize="17" fontFamily="Liberation Sans Narrow, Liberation Sans">
          <text x="0" y="20">
            MAGNIT
          </text>
          <text x="66" y="20">
            LA
          </text>
        </g>
        <circle cx="58" cy="15" r="6" fill="none" stroke="#e0526a" strokeWidth="2" />
        <path d="M58 18V23" stroke="#e0526a" strokeWidth="2" />
        <text x="34" y="30" fontSize="6" fill="#a8a8a8">
          CarAudio
        </text>
        <text x="64" y="30" fontSize="6" fill="#e0526a">
          Team
        </text>
      </LogoMark>
    </Page>
  );
}
